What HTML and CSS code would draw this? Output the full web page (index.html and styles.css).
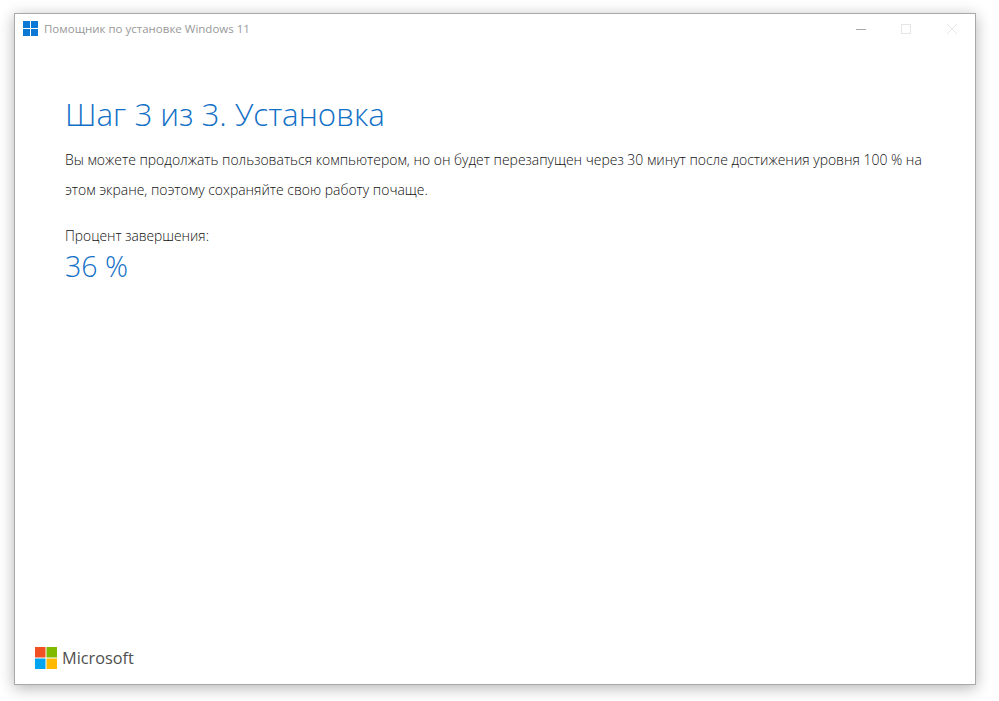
FILE: index.html
```html
<!DOCTYPE html>
<html lang="ru">
<head>
  <meta charset="UTF-8" />
  <title>Помощник по установке Windows 11</title>
  <link rel="stylesheet" href="styles.css">
</head>
<body>
  <div class="window">
    <div class="titlebar">
      <svg class="app-icon" width="15" height="15" viewBox="0 0 15 15">
        <rect x="0" y="0" width="7" height="7" fill="#0a78d4"/>
        <rect x="8" y="0" width="7" height="7" fill="#0a78d4"/>
        <rect x="0" y="8" width="7" height="7" fill="#0a78d4"/>
        <rect x="8" y="8" width="7" height="7" fill="#0a78d4"/>
      </svg>
      <span class="app-title">Помощник по установке Windows 11</span>
      <div class="controls">
        <svg width="10" height="10" viewBox="0 0 10 10"><path d="M0 5.5H10" stroke="#a8a8a8" fill="none"/></svg>
        <svg width="10" height="10" viewBox="0 0 10 10"><rect x=".5" y=".5" width="9" height="9" stroke="#e6e6e6" fill="none"/></svg>
        <svg class="close" width="10" height="10" viewBox="0 0 10 10"><path d="M0 0L10 10M10 0L0 10" stroke="#e6e6e6" fill="none"/></svg>
      </div>
    </div>
    <main class="content">
      <h1>Шаг 3 из 3. Установка</h1>
      <p class="info">Вы можете продолжать пользоваться компьютером, но он будет перезапущен через 30 минут после достижения уровня 100 % на этом экране, поэтому сохраняйте свою работу почаще.</p>
      <div class="progress-label">Процент завершения:</div>
      <div class="progress-value">36 %</div>
    </main>
    <div class="footer">
      <svg width="22" height="22" viewBox="0 0 22 22">
        <rect x="0" y="0" width="10.5" height="10.5" fill="#f25022"/>
        <rect x="11.5" y="0" width="10.5" height="10.5" fill="#7fba00"/>
        <rect x="0" y="11.5" width="10.5" height="10.5" fill="#00a4ef"/>
        <rect x="11.5" y="11.5" width="10.5" height="10.5" fill="#ffb900"/>
      </svg>
      <span class="ms-name">Microsoft</span>
    </div>
  </div>
</body>
</html>
```
FILE: styles.css
```css
html, body {
  height: 100%;
}

body {
  margin: 0;
  background: #fff;
  font-family: "Open Sans", Arial, sans-serif;
  overflow: hidden;
}

.window {
  display: flex;
  flex-direction: column;
  box-sizing: border-box;
  width: 962px;
  height: 672px;
  margin: 13px 0 0 14px;
  background: #fff;
  border: 1px solid #a9a9a9;
  box-shadow: 0 3px 14px rgba(0, 0, 0, 0.3);
}

.titlebar {
  display: flex;
  align-items: center;
  height: 29px;
  padding-left: 8px;
}

.app-title {
  margin-left: 6px;
  font-size: 11.5px;
  color: #999;
}

.controls {
  display: flex;
  align-items: center;
  gap: 35px;
  margin-left: auto;
  margin-right: 18px;
}

.controls .close {
  margin-left: 1px;
}

.content {
  flex: 1;
  padding: 51px 50px 0;
}

h1 {
  margin: 0;
  font-size: 31.3px;
  font-weight: 300;
  line-height: 40px;
  color: #1270c6;
}

.info {
  margin: 11px 0 0;
  font-size: 13.95px;
  font-weight: 300;
  line-height: 30px;
  color: #111;
}

.progress-label {
  margin-top: 21px;
  font-size: 13.8px;
  font-weight: 300;
  color: #111;
}

.progress-value {
  margin-top: 3px;
  font-size: 28.5px;
  font-weight: 300;
  line-height: 36px;
  color: #1270c6;
}

.footer {
  display: flex;
  align-items: center;
  gap: 5px;
  padding: 0 0 15px 20px;
}

.ms-name {
  font-size: 16.3px;
  font-weight: 500;
  color: #4f4f4f;
}
```
